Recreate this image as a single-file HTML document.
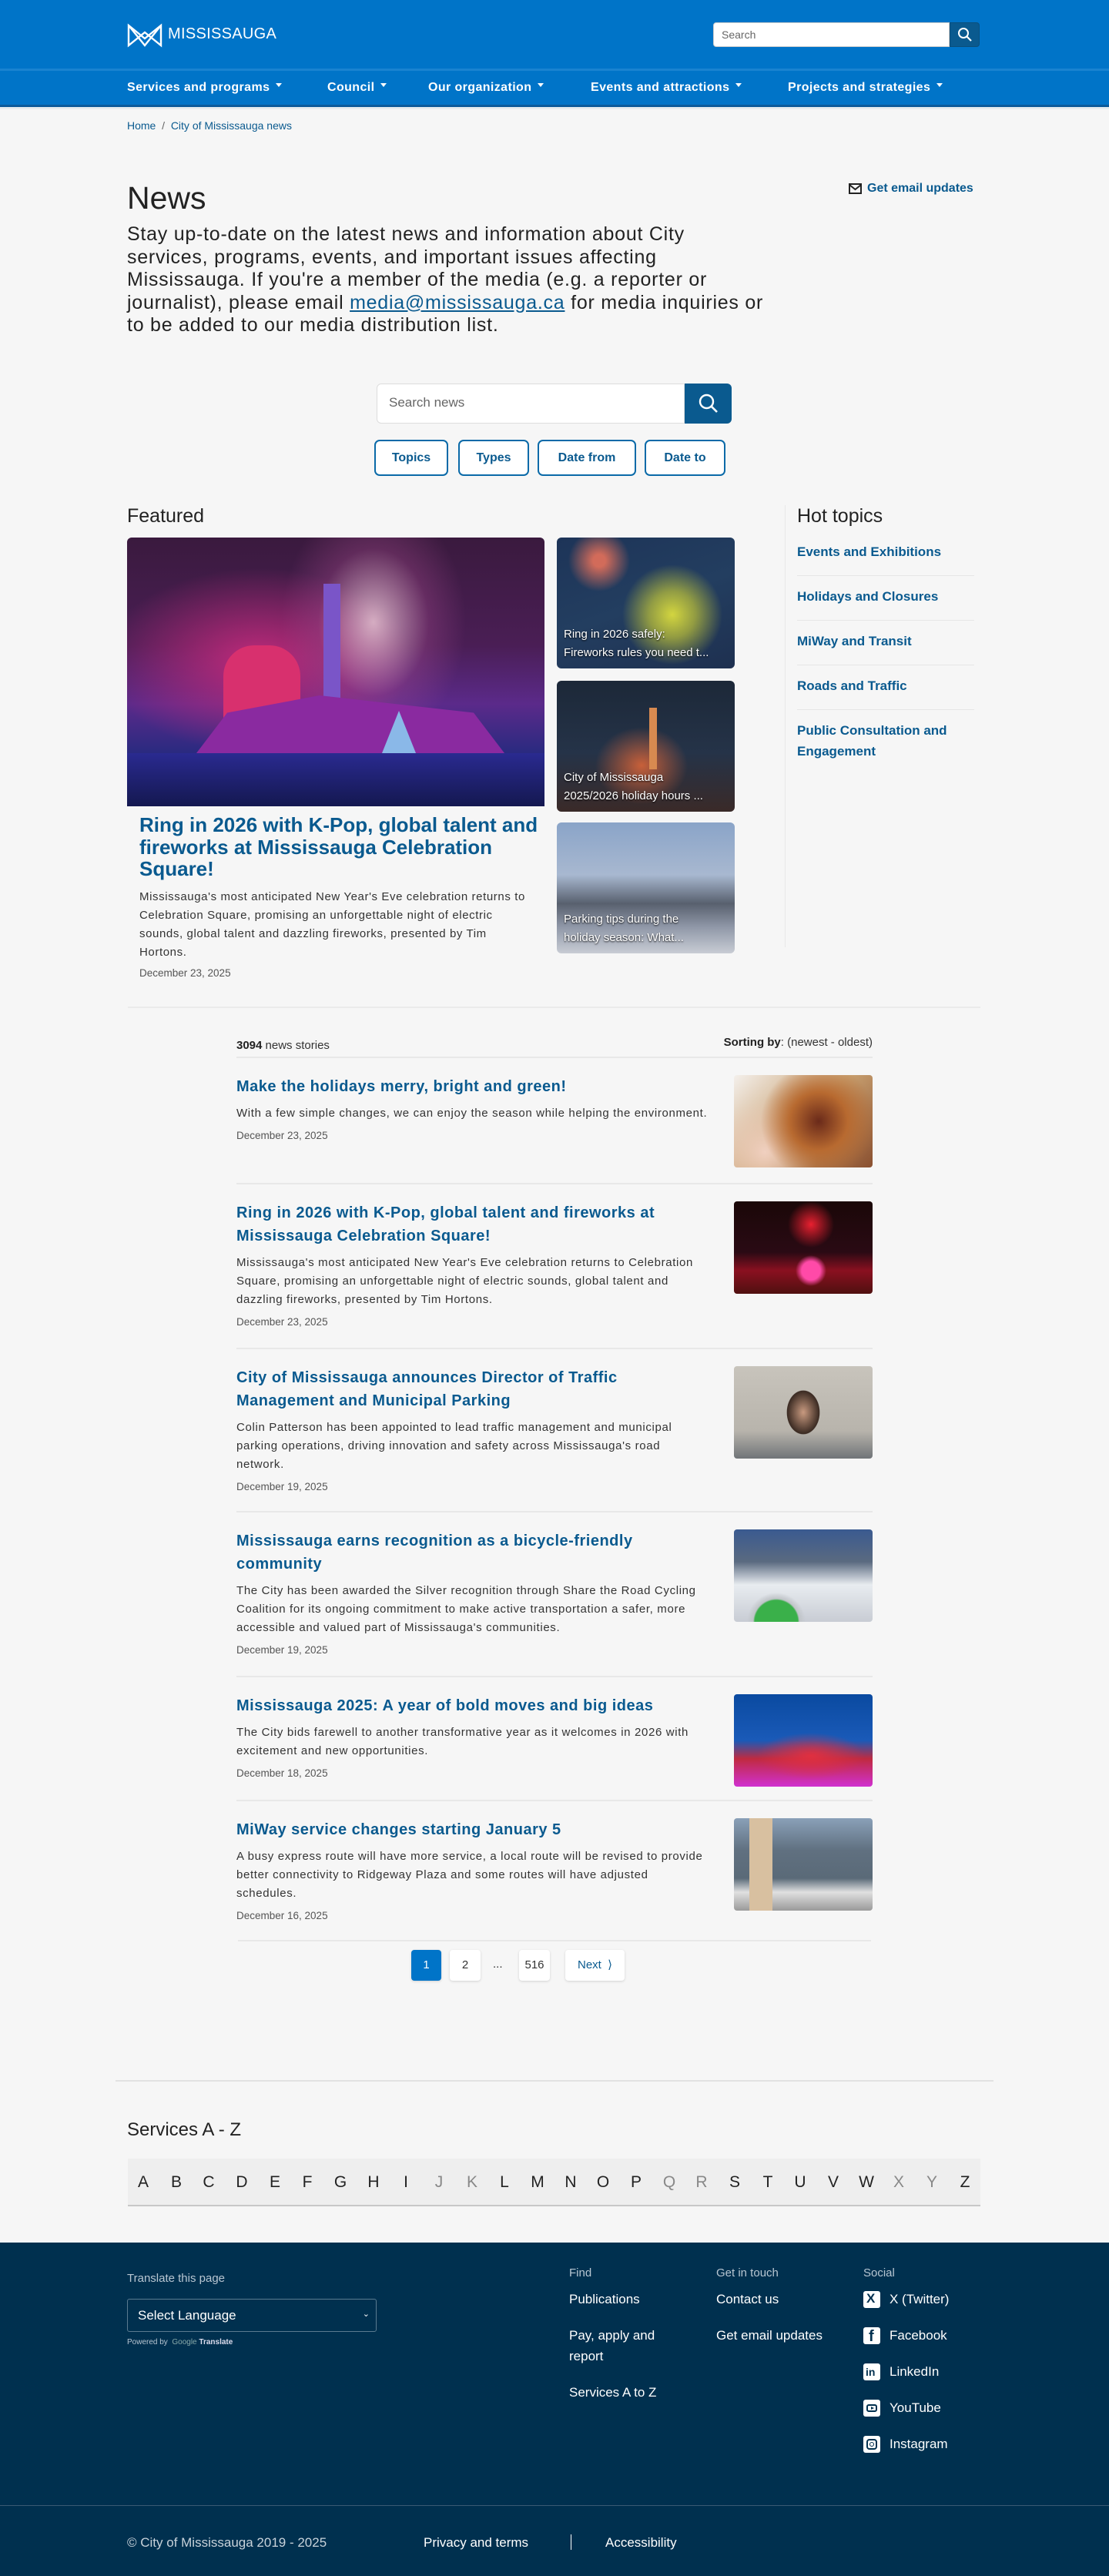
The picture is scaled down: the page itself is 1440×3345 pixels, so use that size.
<!DOCTYPE html>
<html lang="en"><head><meta charset="utf-8"><title>News - City of Mississauga</title>
<style>
*{box-sizing:border-box;margin:0;padding:0}
body{width:1440px;height:3345px;position:relative;background:#f6f6f6;font-family:"Liberation Sans",sans-serif;color:#222;overflow:hidden}
.a{position:absolute}
a{text-decoration:none;color:#0a5a8f}
.hdr{left:0;top:0;width:1440px;height:89px;background:#0074c8}
.nav{left:0;top:89px;width:1440px;height:50px;background:#0074c8;border-top:3px solid #1a83d0;border-bottom:3px solid #0a5a9a}
.nav span{position:absolute;top:13px;color:#fff;font-size:16px;font-weight:bold;white-space:nowrap;letter-spacing:0.4px}
.nav span:after{content:"";display:inline-block;margin-left:8px;vertical-align:middle;border-left:4px solid transparent;border-right:4px solid transparent;border-top:5px solid #fff;position:relative;top:-3px}
.btn{position:absolute;top:571px;height:47px;border:2px solid #0a6aa8;border-radius:7px;background:#fff;color:#0a5a8f;font-size:16px;font-weight:bold;text-align:center;line-height:43px}
.card{position:absolute;left:723px;width:231px;height:170px;border-radius:6px;overflow:hidden}
.card .cap{position:absolute;left:9px;bottom:8px;right:6px;color:#fff;font-size:15px;line-height:24px;text-shadow:0 1px 2px #000;white-space:nowrap;overflow:hidden}
.ht{position:absolute;left:1035px;width:230px;color:#0a5a8f;font-size:17px;font-weight:bold;line-height:27px}
.hs{position:absolute;left:1035px;width:230px;height:1px;background:#e6e6e6}
.item{position:absolute;left:307px;width:826px;border-top:2px solid #e8e8e8;padding:22px 0 22px;display:flex;justify-content:space-between}
.item .tx{width:630px}
.item h3{font-size:20px;line-height:30px;color:#0a5a8f;font-weight:bold;white-space:nowrap;letter-spacing:0.5px}
.item p{margin-top:8px;font-size:15px;line-height:24px;color:#333;white-space:nowrap;letter-spacing:0.65px}
.item .d{margin-top:7px;font-size:13.5px;line-height:20px;color:#555}
.item .im{width:180px;height:120px;border-radius:4px;flex:none}
.pg{position:absolute;top:2532px;height:40px;border-radius:4px;background:#fff;box-shadow:0 1px 3px rgba(0,0,0,.15);text-align:center;line-height:40px;font-size:15px;color:#333}
.az{left:166px;top:2803px;width:1107px;height:62px;background:#eeeeee;border-bottom:2px solid #c8c8c8}
.az span{position:absolute;top:19px;font-size:21px;color:#222;width:30px;text-align:center}
.az span.g{color:#888}
.ft{left:0;top:2912px;width:1440px;height:433px;background:#00304f;color:#fff}
.fh{position:absolute;top:31px;font-size:15px;color:#b8c6d2}
.fl{position:absolute;font-size:17px;color:#fff;line-height:27px;white-space:nowrap}
.si{position:absolute;left:1121px;width:22px;height:22px;background:#fff;border-radius:3px}
</style></head><body>

<div class="a hdr"></div>
<svg class="a" style="left:165px;top:30px" width="46" height="32" viewBox="0 0 46 32"><g fill="none" stroke="#fff" stroke-width="2.4"><path d="M2 3 L2 29 L23 12 L44 29 L44 3 L23 20 Z"/><path d="M2 3 L23 29 L44 3"/></g></svg>
<div class="a" style="left:218px;top:33px;color:#fff;font-size:20px;letter-spacing:0.3px">MISSISSAUGA</div>
<div class="a" style="left:926px;top:29px;width:307px;height:32px;background:#fff;border:1px solid #ccc;border-radius:4px 0 0 4px;font-size:14px;color:#666;padding:7px 10px">Search</div>
<div class="a" style="left:1233px;top:29px;width:39px;height:32px;background:#0a5a8f;border:1px solid #0b4f7c;border-radius:0 4px 4px 0"></div>
<svg class="a" style="left:1243px;top:35px" width="20" height="20" viewBox="0 0 20 20"><circle cx="8" cy="8" r="6" fill="none" stroke="#fff" stroke-width="2"/><path d="M12.5 12.5 L18 18" stroke="#fff" stroke-width="2.2"/></svg>

<div class="a nav">
<span style="left:165px">Services and programs</span>
<span style="left:425px">Council</span>
<span style="left:556px">Our organization</span>
<span style="left:767px">Events and attractions</span>
<span style="left:1023px">Projects and strategies</span>
</div>
<div class="a" style="left:0;top:139px;width:1440px;height:3px;background:#e4ecef"></div>

<div class="a" style="left:165px;top:155px;font-size:14px;color:#0a5a8f"><a>Home</a> <span style="color:#666">&nbsp;/&nbsp;</span> <a>City of Mississauga news</a></div>

<div class="a" style="left:165px;top:234px;font-size:41px;color:#222">News</div>
<div class="a" style="left:165px;top:290px;font-size:25px;line-height:29.5px;color:#222;white-space:nowrap;letter-spacing:0.75px">Stay up-to-date on the latest news and information about City<br>services, programs, events, and important issues affecting<br>Mississauga. If you're a member of the media (e.g. a reporter or<br>journalist), please email <a style="text-decoration:underline;color:#0a5a8f">media@mississauga.ca</a> for media inquiries or<br>to be added to our media distribution list.</div>

<svg class="a" style="left:1102px;top:238px" width="17" height="14" viewBox="0 0 17 14"><rect x="1" y="1" width="15" height="12" fill="none" stroke="#222" stroke-width="2"/><path d="M1 2 L8.5 8 L16 2" fill="none" stroke="#222" stroke-width="2"/></svg>
<div class="a" style="left:1126px;top:236px;font-size:16px;font-weight:bold;color:#0a5a8f">Get email updates</div>

<div class="a" style="left:489px;top:498px;width:400px;height:52px;background:#fff;border:1px solid #ddd;border-radius:6px 0 0 6px;font-size:17px;color:#666;padding:14px 15px">Search news</div>
<div class="a" style="left:889px;top:498px;width:61px;height:52px;background:#0a5a8f;border-radius:0 6px 6px 0"></div>
<svg class="a" style="left:906px;top:510px" width="28" height="28" viewBox="0 0 28 28"><circle cx="11.5" cy="11.5" r="8.5" fill="none" stroke="#fff" stroke-width="2.4"/><path d="M17.8 17.8 L25 25" stroke="#fff" stroke-width="2.6"/></svg>
<div class="btn" style="left:486px;width:96px">Topics</div>
<div class="btn" style="left:595px;width:92px">Types</div>
<div class="btn" style="left:698px;width:128px">Date from</div>
<div class="btn" style="left:837px;width:105px">Date to</div>

<div class="a" style="left:165px;top:656px;font-size:25px;color:#222">Featured</div>
<div class="a" style="left:165px;top:698px;width:542px;height:349px;border-radius:6px 6px 0 0;overflow:hidden;background:radial-gradient(ellipse 120px 160px at 320px 110px,rgba(255,220,230,.75),rgba(180,80,150,.3) 60%,transparent),radial-gradient(ellipse 200px 120px at 170px 160px,#c02a7a,transparent),linear-gradient(180deg,#3a1a3e 0%,#4a1e55 40%,#5b2a8a 62%,#2a2a80 80%,#141848 100%)">
<div class="a" style="left:125px;top:140px;width:100px;height:110px;background:#d8306e;border-radius:40px 40px 0 0"></div>
<div class="a" style="left:255px;top:60px;width:22px;height:150px;background:#7a55c8"></div>
<div class="a" style="left:90px;top:205px;width:400px;height:75px;background:#8a2aa0;clip-path:polygon(10% 30%,40% 0,90% 30%,100% 100%,0 100%)"></div>
<div class="a" style="left:325px;top:225px;width:0;height:0;border-left:28px solid transparent;border-right:28px solid transparent;border-bottom:70px solid #8ab8e8"></div>
<div class="a" style="left:0;top:280px;width:542px;height:69px;background:linear-gradient(#2a2a90,#141850)"></div>
</div>
<div class="a" style="left:181px;top:1057px;font-size:26px;line-height:28.5px;font-weight:bold;color:#0a5a8f;white-space:nowrap">Ring in 2026 with K-Pop, global talent and<br>fireworks at Mississauga Celebration<br>Square!</div>
<div class="a" style="left:181px;top:1153px;font-size:15px;line-height:24px;color:#333;white-space:nowrap;letter-spacing:0.6px">Mississauga's most anticipated New Year's Eve celebration returns to<br>Celebration Square, promising an unforgettable night of electric<br>sounds, global talent and dazzling fireworks, presented by Tim<br>Hortons.</div>
<div class="a" style="left:181px;top:1256px;font-size:13.5px;color:#555">December 23, 2025</div>

<div class="card" style="top:698px;background:radial-gradient(circle at 55px 30px,rgba(255,120,90,.8) 0,rgba(255,120,90,.8) 8px,transparent 40px),radial-gradient(circle at 150px 100px,rgba(230,230,60,.9) 0,rgba(220,220,50,.6) 30px,transparent 65px),linear-gradient(160deg,#1d3458,#233e60 50%,#1e3050)"><div class="cap">Ring in 2026 safely:<br>Fireworks rules you need t...</div></div>
<div class="card" style="top:884px;background:radial-gradient(ellipse 60px 50px at 110px 110px,#c8603a,transparent),linear-gradient(180deg,#1c2838 0%,#253348 55%,#3a2a28 100%)"><div class="a" style="left:120px;top:35px;width:10px;height:80px;background:#d88a50"></div><div class="cap">City of Mississauga<br>2025/2026 holiday hours ...</div></div>
<div class="card" style="top:1068px;background:linear-gradient(180deg,#8aa4c8 0%,#a8b8d0 40%,#58606e 62%,#9098a8 80%,#c8ccd4 100%)"><div class="cap">Parking tips during the<br>holiday season: What...</div></div>

<div class="a" style="left:1019px;top:656px;width:1px;height:574px;background:#e8e8e8"></div>
<div class="a" style="left:1035px;top:656px;font-size:25px;color:#222">Hot topics</div>
<div class="ht" style="top:703px">Events and Exhibitions</div>
<div class="hs" style="top:747px"></div>
<div class="ht" style="top:761px">Holidays and Closures</div>
<div class="hs" style="top:805px"></div>
<div class="ht" style="top:819px">MiWay and Transit</div>
<div class="hs" style="top:863px"></div>
<div class="ht" style="top:877px">Roads and Traffic</div>
<div class="hs" style="top:921px"></div>
<div class="ht" style="top:935px">Public Consultation and<br>Engagement</div>

<div class="a" style="left:166px;top:1307px;width:1107px;height:2px;background:#ebebeb"></div>

<div class="a" style="left:307px;top:1349px;font-size:15px;color:#333"><b style="color:#222">3094</b> news stories</div>
<div class="a" style="left:800px;top:1345px;width:333px;text-align:right;font-size:15px;color:#333"><b style="color:#222">Sorting by</b>: (newest - oldest)</div>

<div class="item" style="top:1372px"><div class="tx"><h3>Make the holidays merry, bright and green!</h3><p>With a few simple changes, we can enjoy the season while helping the environment.</p><div class="d">December 23, 2025</div></div><div class="im" style="background:radial-gradient(circle at 110px 60px,#6a2a1a,#b86a30 30%,transparent 60%),radial-gradient(circle at 40px 100px,#f0d0c0,transparent 40%),linear-gradient(135deg,#f4f0ec 0%,#c8a070 50%,#8a5030 100%)"></div></div>
<div class="item" style="top:1536px"><div class="tx"><h3>Ring in 2026 with K-Pop, global talent and fireworks at<br>Mississauga Celebration Square!</h3><p>Mississauga's most anticipated New Year's Eve celebration returns to Celebration<br>Square, promising an unforgettable night of electric sounds, global talent and<br>dazzling fireworks, presented by Tim Hortons.</p><div class="d">December 23, 2025</div></div><div class="im" style="background:radial-gradient(circle at 100px 90px,#ff4aa8 0,#ff4aa8 12px,transparent 20px),radial-gradient(circle at 100px 30px,#e82030,transparent 30px),linear-gradient(180deg,#1a0808 0%,#2a0a14 55%,#8a1020 75%,#501010 100%)"></div></div>
<div class="item" style="top:1750px"><div class="tx"><h3>City of Mississauga announces Director of Traffic<br>Management and Municipal Parking</h3><p>Colin Patterson has been appointed to lead traffic management and municipal<br>parking operations, driving innovation and safety across Mississauga's road<br>network.</p><div class="d">December 19, 2025</div></div><div class="im" style="background:radial-gradient(ellipse 30px 40px at 90px 60px,#c89a80,#3a2a22 70%,transparent 72%),linear-gradient(180deg,#c8c4bc,#b8b4ac 70%,#707478)"></div></div>
<div class="item" style="top:1962px"><div class="tx"><h3>Mississauga earns recognition as a bicycle-friendly<br>community</h3><p>The City has been awarded the Silver recognition through Share the Road Cycling<br>Coalition for its ongoing commitment to make active transportation a safer, more<br>accessible and valued part of Mississauga's communities.</p><div class="d">December 19, 2025</div></div><div class="im" style="background:radial-gradient(circle at 55px 120px,#3ab04a 0,#3ab04a 28px,#c0c4c8 30px,transparent 38px),linear-gradient(180deg,#3a5a90 0%,#5a6a80 35%,#e8ecf0 60%,#c8ccd4 100%)"></div></div>
<div class="item" style="top:2176px"><div class="tx"><h3>Mississauga 2025: A year of bold moves and big ideas</h3><p>The City bids farewell to another transformative year as it welcomes in 2026 with<br>excitement and new opportunities.</p><div class="d">December 18, 2025</div></div><div class="im" style="background:radial-gradient(ellipse 70px 30px at 100px 80px,#e03040,transparent),linear-gradient(180deg,#0a4aa0 0%,#1a5ab8 50%,#c02a40 70%,#d030d0 100%)"></div></div>
<div class="item" style="top:2337px"><div class="tx"><h3>MiWay service changes starting January 5</h3><p>A busy express route will have more service, a local route will be revised to provide<br>better connectivity to Ridgeway Plaza and some routes will have adjusted<br>schedules.</p><div class="d">December 16, 2025</div></div><div class="im" style="background:linear-gradient(90deg,transparent 20px,#d8c0a0 20px,#d8c0a0 50px,transparent 50px),linear-gradient(180deg,#8aa0b8 0%,#607080 35%,#5a6a78 65%,#e0e0e0 80%,#9a9a9a 100%)"></div></div>

<div class="a" style="left:309px;top:2519px;width:822px;height:2px;background:#e8e8e8"></div>
<div class="pg" style="left:534px;width:39px;background:#0074c8;color:#fff">1</div>
<div class="pg" style="left:584px;width:40px">2</div>
<div class="a" style="left:640px;top:2542px;font-size:15px;color:#333">...</div>
<div class="pg" style="left:674px;width:40px">516</div>
<div class="pg" style="left:734px;width:77px;color:#0a5a8f">Next &nbsp;&#x27E9;</div>

<div class="a" style="left:150px;top:2701px;width:1140px;height:2px;background:#e2e2e2"></div>
<div class="a" style="left:165px;top:2752px;font-size:24px;color:#222">Services A - Z</div>
<div class="a az">
<span style="left:5px">A</span><span style="left:48px">B</span><span style="left:90px">C</span><span style="left:133px">D</span><span style="left:176px">E</span><span style="left:218px">F</span><span style="left:261px">G</span><span style="left:304px">H</span><span style="left:346px">I</span><span class="g" style="left:389px">J</span><span class="g" style="left:432px">K</span><span style="left:474px">L</span><span style="left:517px">M</span><span style="left:560px">N</span><span style="left:602px">O</span><span style="left:645px">P</span><span class="g" style="left:688px">Q</span><span class="g" style="left:730px">R</span><span style="left:773px">S</span><span style="left:816px">T</span><span style="left:858px">U</span><span style="left:901px">V</span><span style="left:944px">W</span><span class="g" style="left:986px">X</span><span class="g" style="left:1029px">Y</span><span style="left:1072px">Z</span>
</div>

<div class="a ft">
<div class="fh" style="left:165px;top:38px">Translate this page</div>
<div class="a" style="left:165px;top:73px;width:324px;height:43px;border:1px solid #5a7a90;border-radius:3px;font-size:17px;color:#fff;padding:11px 13px">Select Language<span style="position:absolute;right:8px;top:12px;font-size:11px">&#x2304;</span></div>
<div class="a" style="left:165px;top:124px;font-size:10px;color:#b8c6d2">Powered by &nbsp;<span style="color:#8aa">Google</span> <b style="color:#dde">Translate</b></div>

<div class="fh" style="left:739px">Find</div>
<div class="fl" style="left:739px;top:60px">Publications</div>
<div class="fl" style="left:739px;top:107px">Pay, apply and<br>report</div>
<div class="fl" style="left:739px;top:181px">Services A to Z</div>

<div class="fh" style="left:930px">Get in touch</div>
<div class="fl" style="left:930px;top:60px">Contact us</div>
<div class="fl" style="left:930px;top:107px">Get email updates</div>

<div class="fh" style="left:1121px">Social</div>
<div class="si" style="top:63px"></div><div class="a" style="left:1125px;top:63px;font-size:17px;color:#00304f;font-weight:bold">X</div><div class="fl" style="left:1155px;top:60px">X (Twitter)</div>
<div class="si" style="top:110px"></div><div class="a" style="left:1128px;top:111px;font-size:20px;color:#00304f;font-weight:bold">f</div><div class="fl" style="left:1155px;top:107px">Facebook</div>
<div class="si" style="top:157px"></div><div class="a" style="left:1124px;top:160px;font-size:14px;color:#00304f;font-weight:bold">in</div><div class="fl" style="left:1155px;top:154px">LinkedIn</div>
<div class="si" style="top:204px"></div><div class="a" style="left:1125px;top:210px;width:14px;height:10px;border:2px solid #00304f;border-radius:3px"></div><div class="a" style="left:1131px;top:213px;border-left:4px solid #00304f;border-top:2.5px solid transparent;border-bottom:2.5px solid transparent"></div><div class="fl" style="left:1155px;top:201px">YouTube</div>
<div class="si" style="top:251px"></div><div class="a" style="left:1125px;top:255px;width:14px;height:14px;border:2px solid #00304f;border-radius:4px"></div><div class="a" style="left:1129px;top:259px;width:6px;height:6px;border:1.5px solid #00304f;border-radius:50%"></div><div class="fl" style="left:1155px;top:248px">Instagram</div>

<div class="a" style="left:0;top:341px;width:1440px;height:1px;background:#3a5a72"></div>
<div class="fl" style="left:165px;top:376px;color:#c8d2da">© City of Mississauga 2019 - 2025</div>
<div class="fl" style="left:550px;top:376px">Privacy and terms</div>
<div class="a" style="left:741px;top:379px;width:1px;height:20px;background:#fff"></div>
<div class="fl" style="left:786px;top:376px">Accessibility</div>
</div>
</body></html>
